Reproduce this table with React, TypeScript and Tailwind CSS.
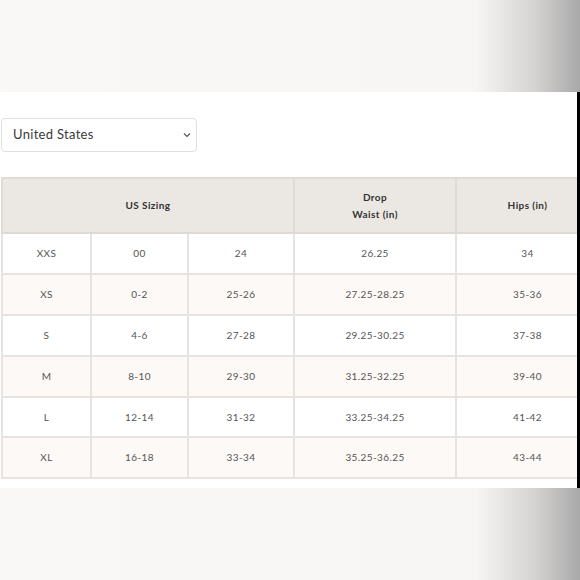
const rows = [
  ["XXS", "00", "24", "26.25", "34"],
  ["XS", "0-2", "25-26", "27.25-28.25", "35-36"],
  ["S", "4-6", "27-28", "29.25-30.25", "37-38"],
  ["M", "8-10", "29-30", "31.25-32.25", "39-40"],
  ["L", "12-14", "31-32", "33.25-34.25", "41-42"],
  ["XL", "16-18", "33-34", "35.25-36.25", "43-44"],
]

function Band() {
  return (
    <div className="h-[92px] w-full bg-[linear-gradient(to_right,#faf8f6_0%,#f8f6f4_82%,#d6d4d2_92%,#a9a9a9_100%)]" />
  )
}

export default function App() {
  return (
    <div className="w-[580px] h-[580px] flex flex-col bg-[#faf8f6] font-['Lato','Open_Sans',sans-serif] overflow-hidden">
      <Band />

      <div className="flex h-[396px]">
        <div className="flex-1 bg-white pt-[26px] pl-[1px] overflow-hidden">
          {/* Country select */}
          <div className="w-[196px] h-[34px] border border-[#e3e1df] rounded-[4px] flex items-center justify-between pl-[11px] pr-[5px] text-[13px] text-[#3a3a3a] tracking-[0.3px]">
            <span>United States</span>
            <svg width="8" height="6" viewBox="0 0 8 6" fill="none" stroke="#555" strokeWidth="1.2">
              <path d="M1 1.5 L4 4.5 L7 1.5" />
            </svg>
          </div>

          {/* Size table - last column runs past the visible edge */}
          <table className="mt-[25px] w-[597px] table-fixed border-collapse text-[10px] text-[#555] text-center tracking-[0.4px]">
            <colgroup>
              <col className="w-[89px]" />
              <col className="w-[97px]" />
              <col className="w-[106px]" />
              <col className="w-[162px]" />
              <col className="w-[143px]" />
            </colgroup>
            <thead>
              <tr className="h-[55px] bg-[#ebe8e4] font-bold text-[#333]">
                <th colSpan={3} className="border-2 border-[#dedbd7] font-bold">US Sizing</th>
                <th className="border-2 border-[#dedbd7] font-bold leading-[17px]">
                  Drop
                  <br />
                  Waist (in)
                </th>
                <th className="border-2 border-[#dedbd7] font-bold">Hips (in)</th>
              </tr>
            </thead>
            <tbody>
              {rows.map((r, i) => (
                <tr key={r[0]} className={i % 2 === 1 ? "h-[40.9px] bg-[#fcf9f7]" : "h-[40.9px] bg-white"}>
                  {r.map((c, j) => (
                    <td key={j} className="border-2 border-[#e6e3e0]">{c}</td>
                  ))}
                </tr>
              ))}
            </tbody>
          </table>
        </div>
        <div className="w-[3px] bg-black" />
      </div>

      <Band />
    </div>
  )
}
